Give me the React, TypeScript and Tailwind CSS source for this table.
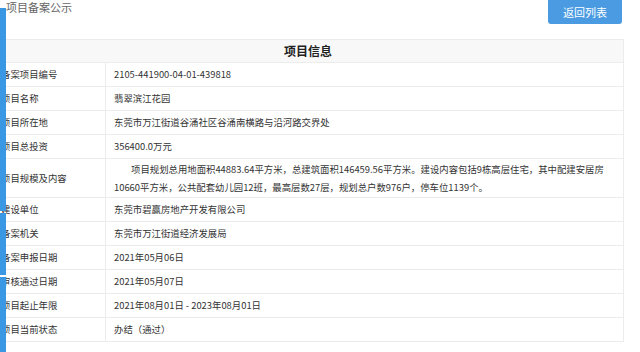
const rows: [string, string][] = [
  ["备案项目编号", "2105-441900-04-01-439818"],
  ["项目名称", "翡翠滨江花园"],
  ["项目所在地", "东莞市万江街道谷涌社区谷涌南横路与沿河路交界处"],
  ["项目总投资", "356400.0万元"],
  ["项目规模及内容", ""],
  ["建设单位", "东莞市碧赢房地产开发有限公司"],
  ["备案机关", "东莞市万江街道经济发展局"],
  ["备案申报日期", "2021年05月06日"],
  ["审核通过日期", "2021年05月07日"],
  ["项目起止年限", "2021年08月01日 - 2023年08月01日"],
  ["项目当前状态", "办结（通过）"],
];

const scale =
  "项目规划总用地面积44883.64平方米，总建筑面积146459.56平方米。建设内容包括9栋高层住宅，其中配建安居房10660平方米，公共配套幼儿园12班，最高层数27层，规划总户数976户，停车位1139个。";

export default function App() {
  return (
    <div
      className="relative h-[352px] w-[640px] overflow-hidden bg-white text-[#333]"
      style={{ fontFamily: '"Noto Sans CJK SC", "Noto Sans", sans-serif' }}
    >
      <div className="flex items-start justify-between pr-[18px]">
        <h1 className="pl-[6px] text-[11px] leading-[14px] text-[#666]">项目备案公示</h1>
        <button className="h-6 w-[74px] rounded-b-[3px] bg-[#4a9be2] text-[11px] text-white">
          返回列表
        </button>
      </div>

      <table className="-ml-2 mt-[15px] w-[632px] border-collapse text-[9.4px]">
        <thead>
          <tr>
            <th
              colSpan={2}
              className="h-[23px] border border-[#ececec] bg-[#f8f8f8] text-[12px] font-bold text-[#222]"
            >
              项目信息
            </th>
          </tr>
        </thead>
        <tbody>
          {rows.map(([k, v]) => (
            <tr key={k}>
              <td className="h-6 w-[113px] border border-[#ececec] pl-2 align-middle">{k}</td>
              <td className="border border-[#ececec] px-2 align-middle">
                {k === "项目规模及内容" ? (
                  <p className="py-px indent-[17px] leading-[18px]">{scale}</p>
                ) : (
                  v
                )}
              </td>
            </tr>
          ))}
        </tbody>
      </table>

      {/* blue side strip over the labels */}
      <div className="absolute left-0 top-2 flex h-[344px] w-[6px] flex-col gap-[2px]">
        <div className="h-[203px] bg-[#3a97e3]" />
        <div className="h-[62px] bg-[#3a97e3]" />
        <div className="flex-1 bg-[#3a97e3]" />
      </div>
    </div>
  );
}
